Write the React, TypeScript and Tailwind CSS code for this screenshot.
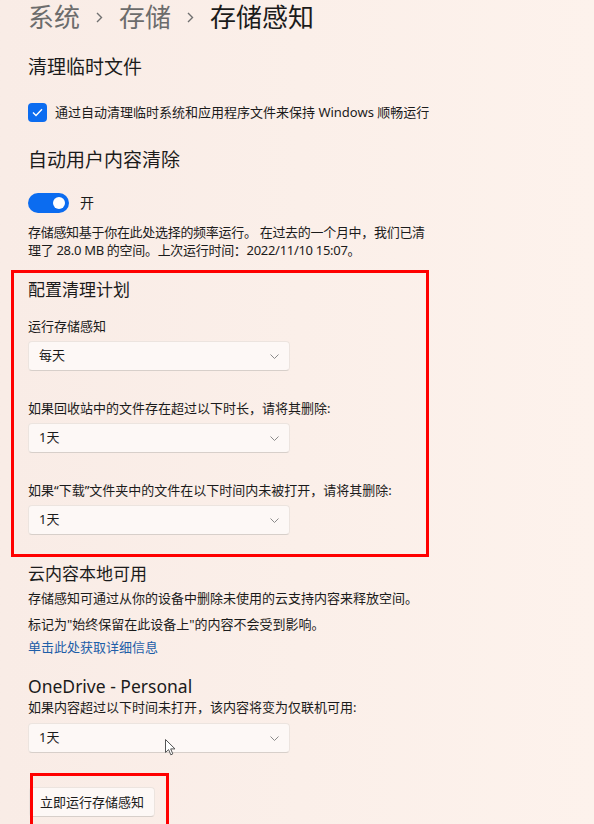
import React from 'react';

const FONT = "font-['Noto_Sans','Noto_Sans_CJK_SC',sans-serif]";

function Crumb() {
  return (
    <svg width="7" height="11" viewBox="0 0 7 11">
      <path d="M1 1 L5.5 5.5 L1 10" fill="none" stroke="#707070" strokeWidth="1.4" />
    </svg>
  );
}

function Dropdown({ value }: { value: string }) {
  return (
    <div className="flex h-[30px] w-[262px] items-center justify-between rounded-[4px] border border-[#ece4df] border-b-[#d7cfca] bg-[#fdf8f6] pl-[10px] pr-[10px] text-[13px] text-[#1b1b1b]">
      <span>{value}</span>
      <svg width="9" height="5" viewBox="0 0 9 5">
        <path d="M0.5 0.5 L4.5 4.5 L8.5 0.5" fill="none" stroke="#8a8a8a" strokeWidth="1" />
      </svg>
    </div>
  );
}

export default function App() {
  return (
    <div
      className={`relative h-[824px] w-[594px] overflow-hidden bg-gradient-to-r from-[#f9ece6] to-[#fdf2ec] px-[28px] text-[#1b1b1b] ${FONT}`}
    >
      {/* breadcrumb */}
      <div className="flex h-[33px] items-center gap-[16px] pt-[2px] text-[26px] leading-[31px]">
        <span className="text-[#6c6c6c]">系统</span>
        <Crumb />
        <span className="text-[#6c6c6c]">存储</span>
        <Crumb />
        <span>存储感知</span>
      </div>

      <h2 className="mt-[21px] text-[19px] leading-[26px]">清理临时文件</h2>

      <div className="mt-[22px] flex h-[20px] items-center gap-[8px]">
        <div className="flex h-[19px] w-[19px] items-center justify-center rounded-[4px] bg-[#0b6cf0]">
          <svg width="11" height="9" viewBox="0 0 11 9">
            <path d="M1 4.6 L4 7.5 L10 1.2" fill="none" stroke="#fff" strokeWidth="1.4" />
          </svg>
        </div>
        <span className="text-[13px] leading-[20px]">通过自动清理临时系统和应用程序文件来保持 Windows 顺畅运行</span>
      </div>

      <h2 className="mt-[25px] text-[19px] leading-[26px]">自动用户内容清除</h2>

      <div className="mt-[20px] flex h-[20px] items-center gap-[11px]">
        <div className="flex h-[20px] w-[41px] items-center rounded-full bg-[#0b6cf0]">
          <div className="ml-auto mr-[4px] h-[12px] w-[12px] rounded-full bg-white" />
        </div>
        <span className="text-[14px] leading-[20px]">开</span>
      </div>

      <p className="mt-[10px] text-[13px] leading-[18px] tracking-[-0.3px]">
        存储感知基于你在此处选择的频率运行。 在过去的一个月中，我们已清
        <br />
        理了 28.0 MB 的空间。上次运行时间：2022/11/10 15:07。
      </p>

      {/* configure schedule (highlighted) */}
      <div className="-ml-[17px] mt-[11px] w-[418px] border-[3px] border-[#ff0000] pb-[19px] pl-[14px] pt-[5px]">
        <h3 className="text-[17px] leading-[24px]">配置清理计划</h3>
        <div className="mt-[14px] text-[13px] leading-[20px]">运行存储感知</div>
        <div className="mt-[5px]">
          <Dropdown value="每天" />
        </div>
        <div className="mt-[27px] text-[13px] leading-[20px]">如果回收站中的文件存在超过以下时长，请将其删除:</div>
        <div className="mt-[5px]">
          <Dropdown value="1天" />
        </div>
        <div className="mt-[27px] text-[13px] leading-[20px]">如果“下载”文件夹中的文件在以下时间内未被打开，请将其删除:</div>
        <div className="mt-[5px]">
          <Dropdown value="1天" />
        </div>
      </div>

      <h3 className="mt-[6px] text-[17px] leading-[22px]">云内容本地可用</h3>
      <p className="mt-[3px] text-[13px] leading-[20px]">存储感知可通过从你的设备中删除未使用的云支持内容来释放空间。</p>
      <p className="mt-[6px] text-[13px] leading-[20px]">标记为"始终保留在此设备上"的内容不会受到影响。</p>
      <a className="mt-[3px] block text-[13px] leading-[20px] text-[#1e5ea8]">单击此处获取详细信息</a>

      <h3 className="mt-[17px] text-[17.5px] leading-[24px]">OneDrive - Personal</h3>
      <div className="text-[13px] leading-[18px]">如果内容超过以下时间未打开，该内容将变为仅联机可用:</div>
      <div className="mt-[7px]">
        <Dropdown value="1天" />
      </div>

      <div className="relative mt-[20px] h-[71px]">
        <button className="ml-[1px] mt-[14px] h-[30px] rounded-[4px] border border-[#ece4df] border-b-[#d7cfca] bg-[#fdf8f6] px-[10px] text-[13px] leading-[28px] text-[#1b1b1b]">
          立即运行存储感知
        </button>
        <div className="absolute left-[2px] top-0 h-[62px] w-[139px] border-[3px] border-[#ff0000]" />
      </div>

      {/* mouse pointer */}
      <svg className="absolute left-[165px] top-[739px]" width="11" height="17" viewBox="0 0 11 17">
        <path d="M0.5 0.5 L0.5 13.5 L3.6 10.6 L5.8 15.8 L7.8 14.9 L5.7 9.9 L10 9.9 Z" fill="#fff" stroke="#555" strokeWidth="1" />
      </svg>
    </div>
  );
}
